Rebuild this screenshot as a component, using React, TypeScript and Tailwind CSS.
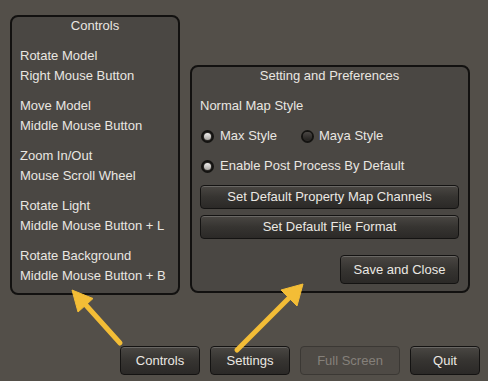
import React from "react";

const controls = [
  ["Rotate Model", "Right Mouse Button"],
  ["Move Model", "Middle Mouse Button"],
  ["Zoom In/Out", "Mouse Scroll Wheel"],
  ["Rotate Light", "Middle Mouse Button + L"],
  ["Rotate Background", "Middle Mouse Button + B"],
];

const font = { fontFamily: '"Liberation Sans", Arial, sans-serif' };

function Btn({ label, className = "", disabled = false }: { label: string; className?: string; disabled?: boolean }) {
  if (disabled) {
    return (
      <div className={`flex items-center justify-center rounded-[4px] border border-[#3b3834] bg-[#4e4a45] text-[13px] text-[#85807a] ${className}`}>
        {label}
      </div>
    );
  }
  return (
    <div
      className={`flex items-center justify-center rounded-[4px] border border-[#141312] bg-gradient-to-b from-[#4a4743] via-[#363431] to-[#2b2927] text-[13px] text-[#ebe8e3] shadow-[inset_0_1px_0_rgba(255,255,255,0.18)] ${className}`}
    >
      {label}
    </div>
  );
}

function Radio({ on }: { on: boolean }) {
  return (
    <div className="flex h-[13px] w-[13px] items-center justify-center rounded-full border-2 border-[#141311] bg-[#2e2c29]">
      {on ? (
        <div className="h-[7px] w-[7px] rounded-full bg-gradient-to-b from-[#f0efed] to-[#a9a6a2]" />
      ) : (
        <div className="h-[8px] w-[9px] rounded-full bg-gradient-to-b from-[#4a4744] to-[#262422]" />
      )}
    </div>
  );
}

export default function App() {
  return (
    <div className="relative h-[381px] w-[488px] overflow-hidden bg-[#534f49] text-[13px] text-[#e9e6e1]" style={font}>
      <div className="flex items-start gap-[10px] pl-[10px] pt-[15px]">
        {/* controls panel */}
        <div className="flex h-[280px] w-[170px] flex-col rounded-[8px] border-2 border-[#121110] bg-[#4a4743] px-2 pt-px">
          <div className="text-center leading-[16px]">Controls</div>
          <div className="mt-3 flex flex-col gap-[10px]">
            {controls.map(([a, b]) => (
              <div key={a} className="flex flex-col leading-[20px]">
                <span>{a}</span>
                <span>{b}</span>
              </div>
            ))}
          </div>
        </div>

        {/* settings panel */}
        <div className="mt-[50px] flex h-[228px] w-[280px] flex-col rounded-[8px] border-2 border-[#121110] bg-[#4a4743] pl-2 pr-[9px] pt-px">
          <div className="text-center leading-[16px]">Setting and Preferences</div>
          <div className="mt-3 leading-[20px]">Normal Map Style</div>
          <div className="mt-[10px] flex h-[20px] items-center">
            <div className="ml-px flex w-[100px] items-center gap-[6px]">
              <Radio on />
              <span>Max Style</span>
            </div>
            <div className="flex items-center gap-[5px]">
              <Radio on={false} />
              <span>Maya Style</span>
            </div>
          </div>
          <div className="mt-[10px] ml-px flex h-[20px] items-center gap-[6px]">
            <Radio on />
            <span>Enable Post Process By Default</span>
          </div>
          <Btn label="Set Default Property Map Channels" className="mt-[9px] h-[24px]" />
          <Btn label="Set Default File Format" className="mt-[6px] h-[24px]" />
          <div className="mt-4 flex justify-end">
            <Btn label="Save and Close" className="h-[29px] w-[119px]" />
          </div>
        </div>
      </div>

      {/* bottom buttons */}
      <div className="mt-[51px] flex justify-end gap-[10px] pr-[8px]">
        <Btn label="Controls" className="h-[29px] w-[80px]" />
        <Btn label="Settings" className="h-[29px] w-[80px]" />
        <Btn label="Full Screen" className="h-[29px] w-[100px]" disabled />
        <Btn label="Quit" className="h-[29px] w-[70px]" />
      </div>

      {/* arrows */}
      <svg className="pointer-events-none absolute inset-0" width="488" height="381" viewBox="0 0 488 381">
        <g fill="#f3bd36" stroke="#f3bd36">
          <line x1="120" y1="343" x2="84" y2="303" strokeWidth="5" strokeLinecap="round" />
          <polygon points="72,290 93,298.5 87,304 78,312" strokeWidth="1" strokeLinejoin="round" />
          <line x1="237" y1="350" x2="292" y2="295" strokeWidth="5" strokeLinecap="round" />
          <polygon points="303,284 297,306 290,299 281,290" strokeWidth="1" strokeLinejoin="round" />
        </g>
      </svg>
    </div>
  );
}
